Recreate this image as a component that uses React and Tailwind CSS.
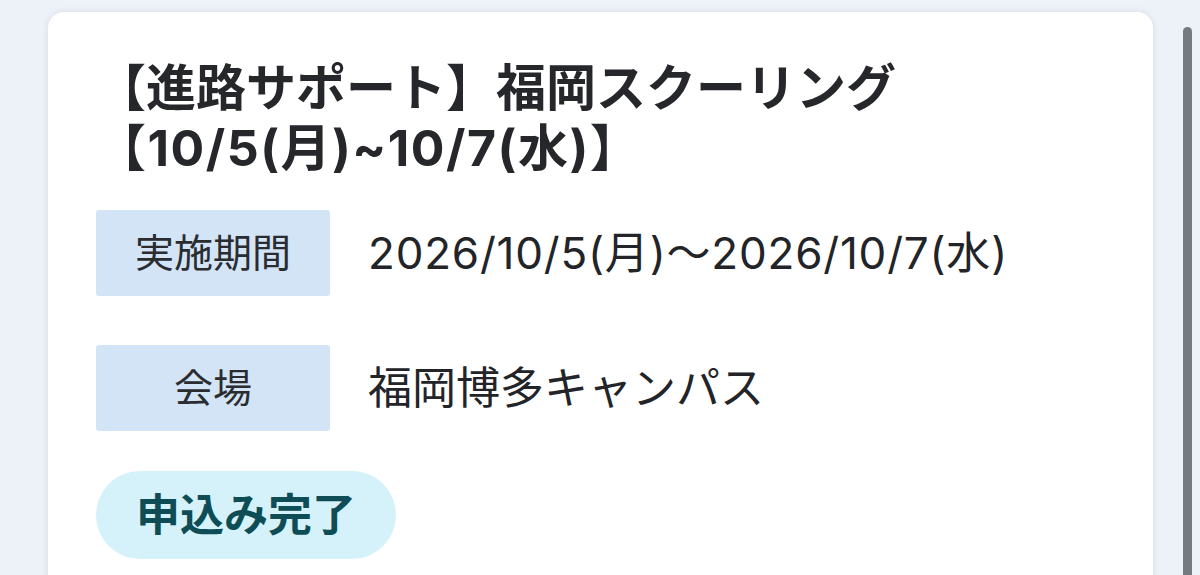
export default function App() {
  const rows = [
    { label: '実施期間', value: '2026/10/5(月)〜2026/10/7(水)', track: 'tracking-[0.8px]' },
    { label: '会場', value: '福岡博多キャンパス', track: '' },
  ];

  return (
    <div
      className="relative h-[575px] overflow-hidden bg-[#edf1f8] pl-[48px] pt-[12px]"
      style={{ fontFamily: 'Inter, "Noto Sans CJK JP", "Noto Sans", sans-serif' }}
    >
      <div className="h-[620px] w-[1105px] rounded-[16px] bg-white px-[48px] pt-[46px] shadow-[0_0_6px_rgba(120,130,150,0.18)]">
        <h1 className="text-[50px] font-bold leading-[60px] text-[#26272b]">
          【進路サポート】福岡スクーリング
          <br />
          <span className="tracking-[1.5px]">【10/5(月)~10/7(水)】</span>
        </h1>

        <div className="mt-[32px] flex flex-col gap-[49px]">
          {rows.map((row) => (
            <div key={row.label} className="flex items-center gap-[38px]">
              <div className="flex h-[86px] w-[234px] items-center justify-center rounded-[3px] bg-[#d2e4f6] text-[39px] text-[#2a2c30]">
                {row.label}
              </div>
              <div className={`text-[44px] text-[#222428] ${row.track}`}>{row.value}</div>
            </div>
          ))}
        </div>

        <div className="mt-[40px] flex h-[88px] w-[300px] items-center justify-center rounded-full bg-[#d5f2fa] text-[44px] font-bold text-[#0e4d55]">
          申込み完了
        </div>
      </div>

      {/* scroll indicator */}
      <div className="absolute left-[1183px] top-[27px] h-[560px] w-[9px] rounded-t-full bg-[#767a7f]" />
    </div>
  );
}
